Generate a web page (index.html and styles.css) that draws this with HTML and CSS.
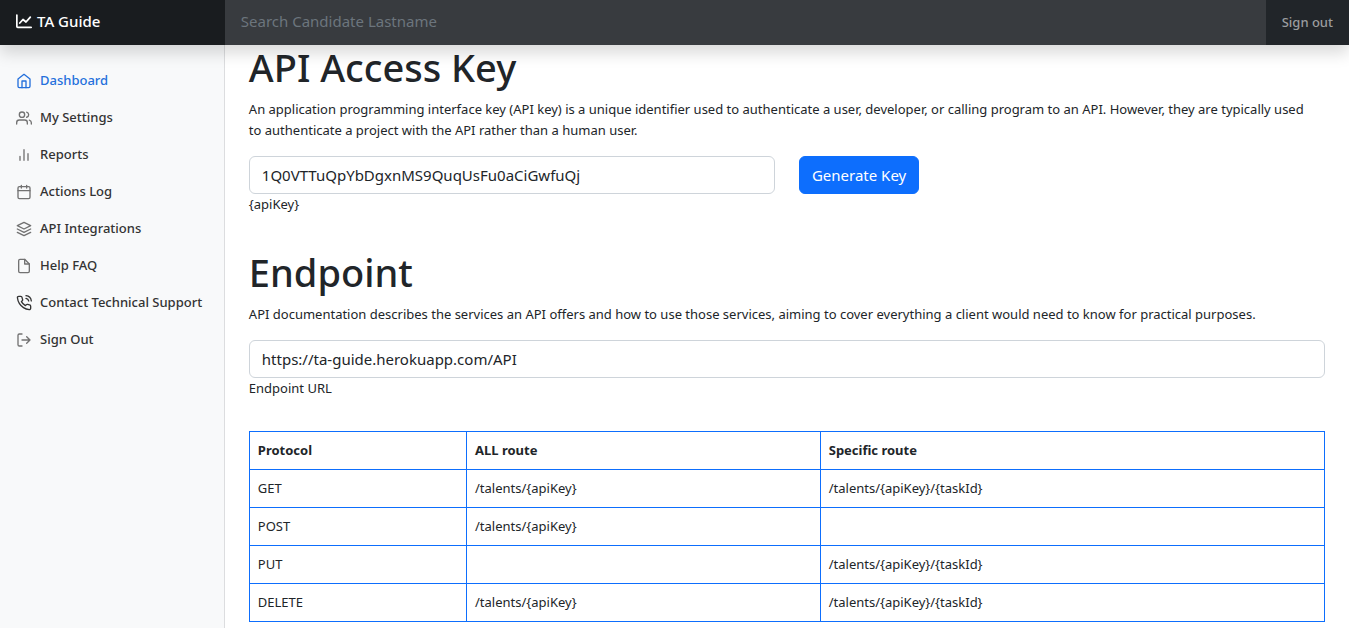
FILE: index.html
```html
<!DOCTYPE html>
<html lang="en">
<head>
<meta charset="utf-8">
<meta name="viewport" content="width=device-width, initial-scale=1">
<title>TA Guide</title>
<link rel="stylesheet" href="styles.css">
</head>
<body>
<header class="topbar">
  <a class="brand" href="#">
    <svg class="brand-icon" viewBox="0 0 16 16" fill="none" stroke="currentColor" stroke-linecap="round" stroke-linejoin="round" aria-hidden="true"><path stroke-width="1.700" d="M.85 1v11.500q0 .85.85.85h13.500"/><path d="M3.800 9l3.200-3.500 3 2.500 4.300-4.800" stroke-width="1.800"/></svg>
    TA Guide
  </a>
  <input class="search" type="text" placeholder="Search Candidate Lastname" aria-label="Search">
  <a class="signout" href="#">Sign out</a>
</header>
<div class="layout">
  <nav class="sidebar" aria-label="Main">
    <ul class="menu">
      <li><a class="menu-link active" href="#"><svg class="icon" viewBox="0 0 24 24"><path d="M3 9l9-7 9 7v11a2 2 0 0 1-2 2H5a2 2 0 0 1-2-2z"/><path d="M9 22V12h6v10"/></svg>Dashboard</a></li>
      <li><a class="menu-link" href="#"><svg class="icon" viewBox="0 0 24 24"><path d="M17 21v-2a4 4 0 0 0-4-4H5a4 4 0 0 0-4 4v2"/><circle cx="9" cy="7" r="4"/><path d="M23 21v-2a4 4 0 0 0-3-3.870M16 3.130a4 4 0 0 1 0 7.750"/></svg>My Settings</a></li>
      <li><a class="menu-link" href="#"><svg class="icon" viewBox="0 0 24 24"><path d="M18 20V10M12 20V4M6 20v-6"/></svg>Reports</a></li>
      <li><a class="menu-link" href="#"><svg class="icon" viewBox="0 0 24 24"><rect x="3" y="4" width="18" height="18" rx="2"/><path d="M16 2v4M8 2v4M3 10h18"/></svg>Actions Log</a></li>
      <li><a class="menu-link" href="#"><svg class="icon" viewBox="0 0 24 24"><path d="M12 2L2 7l10 5 10-5-10-5zM2 17l10 5 10-5M2 12l10 5 10-5"/></svg>API Integrations</a></li>
      <li><a class="menu-link" href="#"><svg class="icon" viewBox="0 0 24 24"><path d="M13 2H6a2 2 0 0 0-2 2v16a2 2 0 0 0 2 2h12a2 2 0 0 0 2-2V9z"/><path d="M13 2v7h7"/></svg>Help FAQ</a></li>
      <li><a class="menu-link" href="#"><svg class="icon icon-dark" viewBox="0 0 24 24"><path d="M15.050 5A5 5 0 0 1 19 8.950M15.050 1A9 9 0 0 1 23 8.940m-1 7.980v3a2 2 0 0 1-2.180 2 19.790 19.790 0 0 1-8.630-3.070 19.500 19.500 0 0 1-6-6 19.790 19.790 0 0 1-3.070-8.670A2 2 0 0 1 4.110 2h3a2 2 0 0 1 2 1.720 12.840 12.840 0 0 0 .7 2.810 2 2 0 0 1-.45 2.110L8.090 9.910a16 16 0 0 0 6 6l1.270-1.270a2 2 0 0 1 2.110-.45 12.840 12.840 0 0 0 2.810.7A2 2 0 0 1 22 16.920z"/></svg>Contact Technical Support</a></li>
      <li><a class="menu-link" href="#"><svg class="icon" viewBox="0 0 24 24"><path d="M9 21H5a2 2 0 0 1-2-2V5a2 2 0 0 1 2-2h4M16 17l5-5-5-5M21 12H9"/></svg>Sign Out</a></li>
    </ul>
  </nav>
  <main class="content">
    <section class="block">
      <h1 class="title">API Access Key</h1>
      <p class="lead">An application programming interface key (API key) is a unique identifier used to authenticate a user, developer, or calling program to an API. However, they are typically used to authenticate a project with the API rather than a human user.</p>
      <div class="key-row">
        <div>
          <input class="field" id="apiKey" type="text" value="1Q0VTTuQpYbDgxnMS9QuqUsFu0aCiGwfuQj">
          <label class="hint" for="apiKey">{apiKey}</label>
        </div>
        <div><button class="button" type="button">Generate Key</button></div>
      </div>
    </section>
    <section class="block">
      <h1 class="title">Endpoint</h1>
      <p class="lead">API documentation describes the services an API offers and how to use those services, aiming to cover everything a client would need to know for practical purposes.</p>
      <input class="field" id="endpoint" type="text" value="https://ta-guide.herokuapp.com/API">
      <label class="hint" for="endpoint">Endpoint URL</label>
    </section>
    <table class="routes">
      <thead>
        <tr><th class="col-protocol" scope="col">Protocol</th><th class="col-all" scope="col">ALL route</th><th scope="col">Specific route</th></tr>
      </thead>
      <tbody>
        <tr><td>GET</td><td>/talents/{apiKey}</td><td>/talents/{apiKey}/{taskId}</td></tr>
        <tr><td>POST</td><td>/talents/{apiKey}</td><td></td></tr>
        <tr><td>PUT</td><td></td><td>/talents/{apiKey}/{taskId}</td></tr>
        <tr><td>DELETE</td><td>/talents/{apiKey}</td><td>/talents/{apiKey}/{taskId}</td></tr>
      </tbody>
    </table>
  </main>
</div>
</body>
</html>
```
FILE: styles.css
```css
* { box-sizing: border-box; }

body {
  margin: 0;
  background: #fff;
  color: #212529;
  font-family: "Segoe UI", "Noto Sans", sans-serif;
  font-size: 13px;
  line-height: 21px;
}

a { text-decoration: none; }

.topbar {
  position: sticky;
  top: 0;
  z-index: 10;
  display: grid;
  grid-template-columns: 16.6667% 1fr auto;
  height: 45px;
  background: #212529;
  box-shadow: 0 8px 16px rgba(0, 0, 0, 0.15);
}

.brand {
  display: flex;
  align-items: center;
  gap: 5px;
  padding: 0 16px 2px;
  background: #191c1f;
  color: #fff;
  font-size: 15px;
  font-weight: 500;
}

.brand-icon { width: 16px; height: 16px; }

.search {
  min-width: 0;
  padding: 0 16px 2px;
  border: 0;
  background: #383b3f;
  color: #fff;
  font: inherit;
  font-size: 15px;
}

.search::placeholder { color: #6c757d; opacity: 1; }

.signout {
  display: flex;
  align-items: center;
  padding: 0 16px;
  color: #9b9d9f;
  font-weight: 500;
}

.layout {
  display: grid;
  grid-template-columns: 16.6667% 1fr;
  min-height: calc(100vh - 45px);
}

.sidebar {
  padding-top: 17px;
  border-right: 1px solid #dcdddf;
  background: #f8f9fa;
}

.menu { margin: 0; padding: 0; list-style: none; }

.menu-link {
  display: flex;
  align-items: center;
  gap: 8px;
  padding: 8px 16px;
  color: #333;
  font-weight: 500;
  white-space: nowrap;
}

.menu-link.active { color: #2470dc; }

.icon {
  width: 16px;
  height: 16px;
  flex: none;
  fill: none;
  stroke: #727272;
  stroke-width: 2;
  stroke-linecap: round;
  stroke-linejoin: round;
}

.active .icon { stroke: currentColor; }
.icon-dark { stroke: #333; }

.content { min-width: 0; padding: 0 24px 6px; }

.block + .block { margin-top: 35px; }

.title {
  margin: 0 0 10px;
  font-size: 38px;
  font-weight: 500;
  line-height: 44px;
}

.lead { margin: 0 0 15px; padding-right: 8px; }

.key-row {
  display: grid;
  grid-template-columns: 1fr 1fr;
  gap: 24px;
}

.field {
  display: block;
  width: 100%;
  height: 38px;
  padding: 6px 12px;
  border: 1px solid #ced4da;
  border-radius: 6px;
  background: #fff;
  color: #212529;
  font: inherit;
  font-size: 15px;
}

.hint { display: block; }

.button {
  height: 38px;
  padding: 6px 12px;
  border: 1px solid #0d6efd;
  border-radius: 6px;
  background: #0d6efd;
  color: #fff;
  font: inherit;
  font-size: 15px;
}

.routes {
  width: 100%;
  margin-top: 32px;
  border-collapse: collapse;
  table-layout: fixed;
}

.routes th,
.routes td {
  height: 38px;
  padding: 8px;
  border: 1px solid #0d6efd;
  text-align: left;
}

.col-protocol { width: 20.2%; }
.col-all { width: 32.9%; }
```
